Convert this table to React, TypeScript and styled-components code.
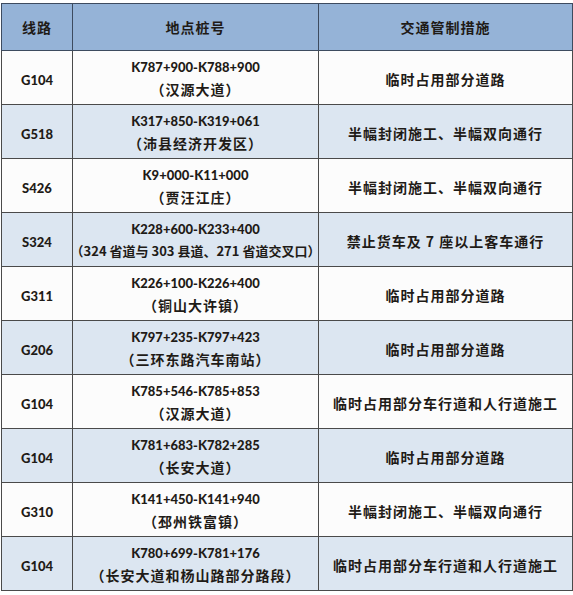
import React from 'react';
import styled, { createGlobalStyle } from 'styled-components';

/* --------------------------------- styles --------------------------------- */

const GlobalStyle = createGlobalStyle`
  html, body {
    margin: 0;
    padding: 0;
    background: #ffffff;
  }
`;

const Page = styled.div`
  padding: 3px 0 0 1px;
  width: 573px;
  height: 595px;
  box-sizing: border-box;
  overflow: hidden;
`;

const Table = styled.table`
  border-collapse: collapse;
  table-layout: fixed;
  width: 568px;
  color: #1f1b17;
  font-family: 'Noto Sans CJK SC', 'Lato', sans-serif;
  font-weight: 700;
`;

const HeadCell = styled.th<{ $width: number }>`
  width: ${(p) => p.$width}px;
  height: 46px;
  padding: 0;
  background: #95b3d7;
  border: 1px solid #3d4b5f;
  font-size: 14px;
  letter-spacing: 1px;
  font-weight: 700;
  text-align: center;
  vertical-align: middle;
`;

const Row = styled.tr<{ $shaded: boolean }>`
  height: 54px;
  background: ${(p) => (p.$shaded ? '#dce6f1' : '#fcfcfc')};
`;

const Cell = styled.td`
  padding: 0;
  border: 1px solid #4a4a4a;
  text-align: center;
  vertical-align: middle;
`;

const Route = styled.span`
  font-family: 'Lato', 'Noto Sans', sans-serif;
  font-size: 13px;
  font-weight: 900;
`;

const Place = styled.div`
  display: flex;
  flex-direction: column;
  align-items: center;
  gap: 6px;
`;

const Range = styled.span`
  font-family: 'Lato', 'Noto Sans', sans-serif;
  font-size: 13px;
  font-weight: 900;
  line-height: 16px;
`;

const Area = styled.span<{ $tight?: boolean }>`
  font-size: ${(p) => (p.$tight ? 13 : 14)}px;
  letter-spacing: ${(p) => (p.$tight ? 0 : 1)}px;
  line-height: 16px;
  white-space: nowrap;
`;

const Measure = styled.span`
  font-size: 14px;
  letter-spacing: 1px;
  white-space: nowrap;
`;

/* ---------------------------------- data ---------------------------------- */

type Item = {
  route: string;
  range: string;
  area: string;
  measure: string;
  tight?: boolean;
};

const items: Item[] = [
  { route: 'G104', range: 'K787+900-K788+900', area: '（汉源大道）', measure: '临时占用部分道路' },
  { route: 'G518', range: 'K317+850-K319+061', area: '（沛县经济开发区）', measure: '半幅封闭施工、半幅双向通行' },
  { route: 'S426', range: 'K9+000-K11+000', area: '（贾汪江庄）', measure: '半幅封闭施工、半幅双向通行' },
  {
    route: 'S324',
    range: 'K228+600-K233+400',
    area: '（324 省道与 303 县道、271 省道交叉口）',
    measure: '禁止货车及 7 座以上客车通行',
    tight: true,
  },
  { route: 'G311', range: 'K226+100-K226+400', area: '（铜山大许镇）', measure: '临时占用部分道路' },
  { route: 'G206', range: 'K797+235-K797+423', area: '（三环东路汽车南站）', measure: '临时占用部分道路' },
  { route: 'G104', range: 'K785+546-K785+853', area: '（汉源大道）', measure: '临时占用部分车行道和人行道施工' },
  { route: 'G104', range: 'K781+683-K782+285', area: '（长安大道）', measure: '临时占用部分道路' },
  { route: 'G310', range: 'K141+450-K141+940', area: '（邳州铁富镇）', measure: '半幅封闭施工、半幅双向通行' },
  { route: 'G104', range: 'K780+699-K781+176', area: '（长安大道和杨山路部分路段）', measure: '临时占用部分车行道和人行道施工' },
];

/* -------------------------------- component ------------------------------- */

const App = (): JSX.Element => (
  <Page>
    <GlobalStyle />
    <Table>
      <thead>
        <tr>
          <HeadCell $width={70}>线路</HeadCell>
          <HeadCell $width={245}>地点桩号</HeadCell>
          <HeadCell $width={253}>交通管制措施</HeadCell>
        </tr>
      </thead>
      <tbody>
        {items.map((item, i) => (
          <Row key={i} $shaded={i % 2 === 1}>
            <Cell>
              <Route>{item.route}</Route>
            </Cell>
            <Cell>
              <Place>
                <Range>{item.range}</Range>
                <Area $tight={item.tight}>{item.area}</Area>
              </Place>
            </Cell>
            <Cell>
              <Measure>{item.measure}</Measure>
            </Cell>
          </Row>
        ))}
      </tbody>
    </Table>
  </Page>
);

export default App;
